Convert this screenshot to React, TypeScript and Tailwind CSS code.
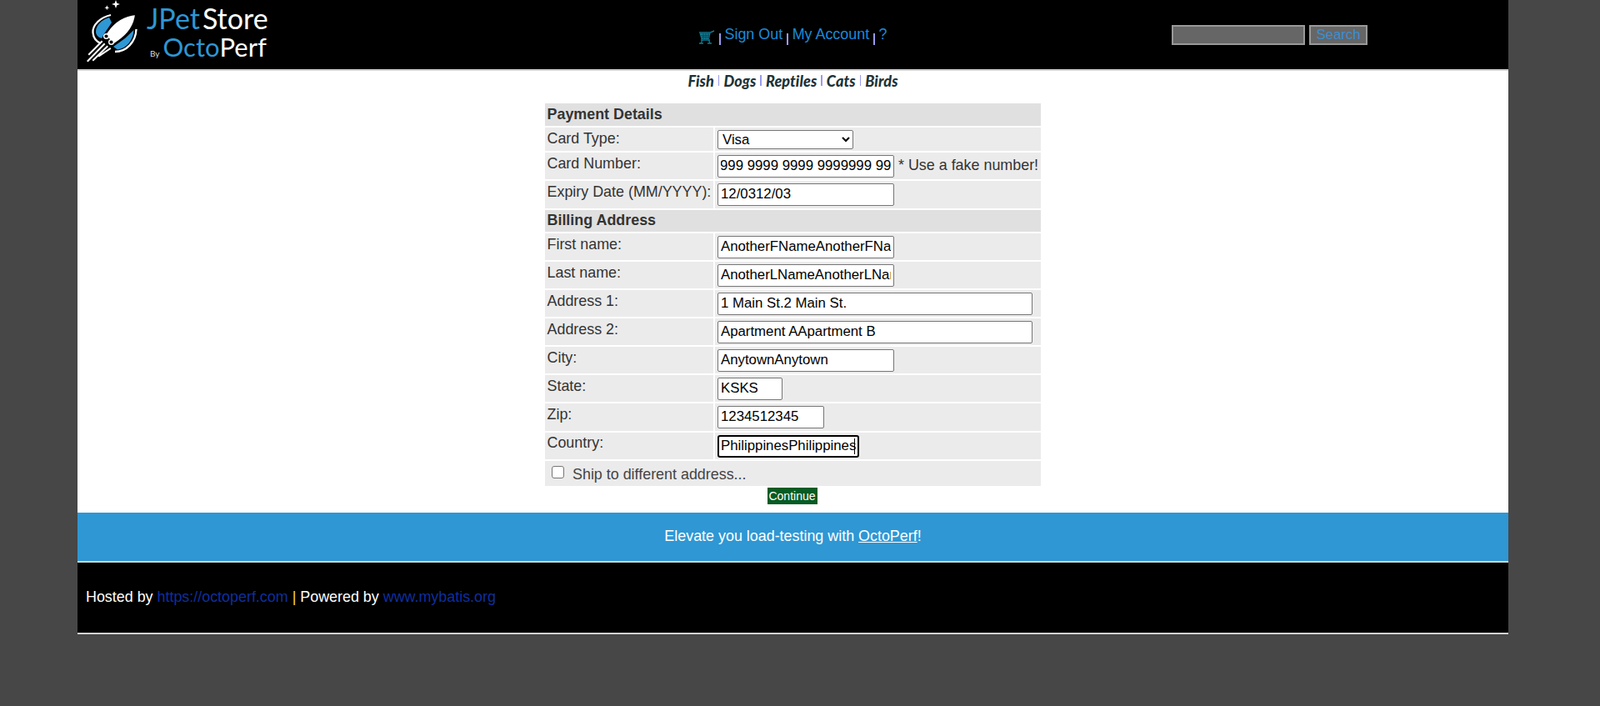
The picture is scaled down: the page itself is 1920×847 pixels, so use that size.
import React from "react";

const font = "font-['Liberation_Sans',Arial,sans-serif]";
const inputCls = "block h-[27px] rounded-[2px] border border-[#767676] bg-white pl-[3px] pr-[3px] pb-[2px] text-[16.800px] leading-none text-black outline-none";

function Rocket() {
  return (
    <svg width="75" height="78" viewBox="0 0 75 78" className="shrink-0" aria-hidden="true">
      <path d="M39 0 l1.300 3.700 L44 5 l-3.700 1.300 L39 10 l-1.300-3.700 L34 5 l3.700-1.300z" fill="#fff" />
      <path d="M28.300 6.300 l.8 2.200 L31.300 9.300 l-2.200.8 L28.300 12.300 l-.8-2.200 L25.300 9.300 l2.200-.8z" fill="#fff" />
      <path d="M33 18 C20 21 11 30 11.500 39 C12 46 16 50 21 52" fill="none" stroke="#fff" strokeWidth="2.300" />
      <path d="M63.500 35 C63 50 52 62 38 62" fill="none" stroke="#fff" strokeWidth="2.300" />
      <path d="M31 21 C22 24 15 30 15 38 C15 42 18 45 22 46 L34 27 Z" fill="#2e97d4" />
      <path d="M60.500 36 C60 48 52 58 41 59.500 L36 56 L50 46 Z" fill="#2e97d4" />
      <path d="M63.300 16.700 C50 18 38 24 29 37 L25.500 42 L36 54 L41 50.500 C54 42 62 30 63.300 16.700Z" fill="#fff" stroke="#000" strokeWidth="2.400" />
      <path d="M25.500 42 L36 54" stroke="#000" strokeWidth="3" fill="none" />
      <circle cx="27.500" cy="43.500" r="2.800" fill="#000" stroke="#fff" strokeWidth="1.400" />
      <circle cx="33.500" cy="50.500" r="2.800" fill="#000" stroke="#fff" strokeWidth="1.400" />
      <g stroke="#fff" strokeWidth="2" strokeLinecap="square">
        <path d="M22 50 L7 65" />
        <path d="M25 53 L5.500 73" />
        <path d="M28.500 56 L12 72" />
        <path d="M32 58.500 L19 67" />
      </g>
    </svg>
  );
}

function Cart() {
  return (
    <svg width="20" height="17" viewBox="0 0 20 17" className="block" aria-hidden="true">
      <path d="M1 3h13.500L19 1" fill="none" stroke="#12788f" strokeWidth="1.400" />
      <path d="M1.500 4h13l-1.500 7H3.500z" fill="#12788f" />
      <path d="M3 6.500h10.500M3.500 8.500h9.500M6 4v7M9 4v7M12 4v7" stroke="#063f4d" strokeWidth="0.700" />
      <path d="M3 12h11M5 12l-2 4M12.500 12l1.500 4M1 16h5M11 16h5" stroke="#12788f" strokeWidth="1.300" fill="none" />
    </svg>
  );
}

function Sep() {
  return <span className="mt-[9px] block h-[14px] w-[1.500px] bg-[#9a9aee]" />;
}

function Label({ children, top = "pt-[3px]" }: { children: React.ReactNode; top?: string }) {
  return <td className={`${top} w-[202px] bg-[#ebebeb] pl-[2.500px] align-top text-[17.900px] leading-[20px] whitespace-nowrap`}>{children}</td>;
}

function Row({ label, value, w, note, h = "h-[32px]" }: { label: string; value: string; w: string; note?: string; h?: string }) {
  return (
    <tr>
      <Label>{label}</Label>
      <td className={`${h} bg-[#ebebeb] pl-[3px] pt-[3px] align-top whitespace-nowrap`}>
        <div className="flex items-start">
          <input readOnly value={value} className={`${inputCls} ${w}`} />
          {note && <span className="ml-[5px] text-[17.900px] leading-[20px] mt-[2px]">{note}</span>}
        </div>
      </td>
    </tr>
  );
}

function Section({ title, h, top }: { title: string; h: string; top: string }) {
  return (
    <tr>
      <th colSpan={2} className={`${h} ${top} bg-[#e0e0e0] pl-[2.500px] align-top text-left text-[17.900px] leading-[20px] font-bold`}>
        {title}
      </th>
    </tr>
  );
}

const species = ["Fish", "Dogs", "Reptiles", "Cats", "Birds"];

export default function App() {
  return (
    <div className={`min-h-[847px] bg-[#474747] pl-[93px] pr-[110px] text-[#333] ${font}`}>
      <header className="flex h-[85px] items-start border-b-2 border-[#d3d3d3] bg-black">
        <div className="flex h-[83px] w-[270px] items-start pl-[7px]">
          <Rocket />
          <div className="ml-[1px] flex flex-col font-['Lato',sans-serif] font-normal leading-none">
            <div className="mt-[5px] flex text-[34px] text-white"><span className="text-[#2e97d4]">JPet</span><span className="ml-[3px]">Store</span></div>
            <div className="mt-[2px] flex items-baseline text-[31px] text-white">
              <span className="mr-[4px] ml-[4px] text-[10px] text-[#ddd]">By</span><span className="text-[#2e97d4]">Octo</span><span>Perf</span>
            </div>
          </div>
        </div>
        <nav className="ml-[475px] mt-[31px] flex w-[230px] shrink-0 items-start gap-[5px] text-[17.900px] leading-[20px] text-[#1b8ad8]">
          <span className="mt-[5px]"><Cart /></span>
          <Sep /><a>Sign Out</a><Sep /><a>My Account</a><Sep /><a>?</a>
        </nav>
        <form className="ml-[338px] mt-[30px] flex shrink-0 gap-[5px]">
          <input readOnly className="h-[24px] w-[160px] border-2 border-[#999] bg-[#666]" />
          <button type="button" className="h-[24px] w-[70px] border-2 border-[#999] bg-[#666] text-[16.800px] leading-none text-[#3b8fd0]">Search</button>
        </form>
      </header>

      <main className="bg-white">
        <div className="flex h-[37px] items-start justify-center pt-[1px] font-['Lato',sans-serif] text-[18px] leading-[22px] font-black italic tracking-[0.1px] text-[#1d3338]">
          {species.map((s, i) => (
            <React.Fragment key={s}>
              {i > 0 && <span className="mx-[5px] mt-[4px] block h-[13px] w-[1.500px] bg-[#9a9aee]" />}
              <span>{s}</span>
            </React.Fragment>
          ))}
        </div>
        <table className="mx-auto w-[599px] border-separate border-spacing-[2px]">
          <tbody>
            <Section title="Payment Details" h="h-[27px]" top="pt-[3px]" />
            <tr>
              <Label>Card Type:</Label>
              <td className="h-[28px] bg-[#ebebeb] pl-[3px] pt-[3px] align-top">
                <select className="block h-[23px] w-[163px] rounded-[2px] border border-[#767676] bg-white pl-[1px] text-[16.800px] leading-none text-black">
                  <option>Visa</option>
                </select>
              </td>
            </tr>
            <Row label="Card Number:" value="999 9999 9999 9999999 9999 9999 9999" w="w-[212px] indent-[-1px]" note="* Use a fake number!" />
            <Row label="Expiry Date (MM/YYYY):" value="12/0312/03" w="w-[212px]" h="h-[33px]" />
            <Section title="Billing Address" h="h-[26px]" top="pt-[2px]" />
            <Row label="First name:" value="AnotherFNameAnotherFName" w="w-[212px]" />
            <Row label="Last name:" value="AnotherLNameAnotherLName" w="w-[212px]" />
            <Row label="Address 1:" value="1 Main St.2 Main St." w="w-[378px]" />
            <Row label="Address 2:" value="Apartment AApartment B" w="w-[378px]" />
            <Row label="City:" value="AnytownAnytown" w="w-[212px]" />
            <Row label="State:" value="KSKS" w="w-[78px]" />
            <Row label="Zip:" value="1234512345" w="w-[128px]" h="h-[33px]" />
            <tr>
              <Label top="pt-[2px]">Country:</Label>
              <td className="h-[32px] bg-[#ebebeb] pl-[3px] pt-[3px] align-top">
                <span className="relative block w-[170px]">
                  <input readOnly value="PhilippinesPhilippines" className="block h-[27px] w-[170px] rounded-[3px] border-2 border-black bg-white pl-[2px] pr-[2px] pb-[2px] text-[16.800px] leading-none text-black outline-none" />
                  <span className="absolute left-[164px] top-[4px] h-[19px] w-px bg-black" />
                </span>
              </td>
            </tr>
            <tr>
              <td colSpan={2} className="h-[30px] bg-[#ebebeb] text-[17.900px] text-[#444]">
                <div className="flex items-center pl-[8px]">
                  <input type="checkbox" readOnly className="mr-[10px] -mt-[3px] h-[15px] w-[15px] appearance-none rounded-[3px] border border-[#767676] bg-white" />
                  <span className="mt-[2px]">Ship to different address...</span>
                </div>
              </td>
            </tr>
          </tbody>
        </table>
        <div className="flex h-[30px] justify-center">
          <button type="button" className="h-[20px] w-[60px] -translate-x-px bg-[#055c24] text-[14px] leading-none text-white">Continue</button>
        </div>
      </main>

      <section className="flex h-[60px] items-center justify-center border-b-2 border-[#d3d3d3] bg-[#2e97d4] pb-[2px] text-[17.900px] text-white">
        <span>Elevate you load-testing with <a className="underline">OctoPerf</a>!</span>
      </section>
      <footer className="flex h-[86px] items-center border-b-2 border-[#d3d3d3] bg-black px-[10px] pb-[2px] text-[17.900px] text-white">
        <span>Hosted by <a className="text-[#0e2f9e]">https://octoperf.com</a> <span className="text-[#ffd23f]">|</span> Powered by <a className="text-[#0e2f9e]">www.mybatis.org</a></span>
      </footer>
    </div>
  );
}
